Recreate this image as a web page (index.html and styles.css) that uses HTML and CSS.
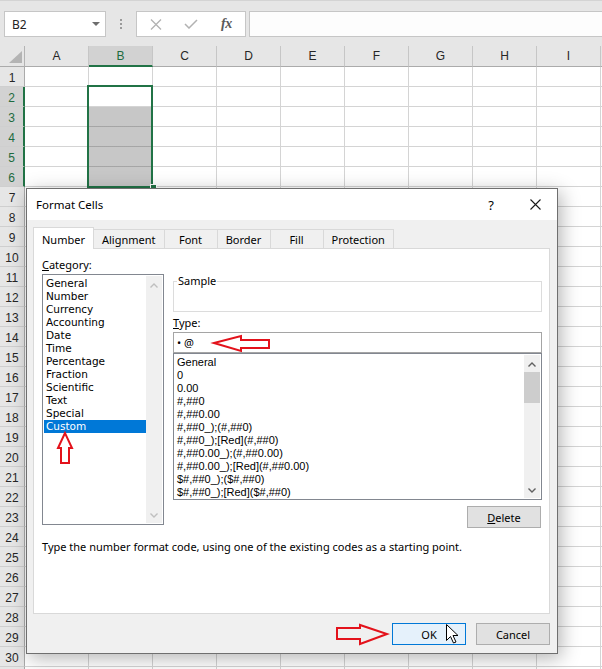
FILE: index.html
```html
<!DOCTYPE html>
<html>
<head>
<meta charset="utf-8">
<title>Format Cells</title>
<link rel="stylesheet" href="styles.css">
</head>
<body>
<div class="screen">
  <div class="formula-bar">
    <div class="namebox">
      <span class="namebox-text">B2</span>
      <svg class="namebox-caret" width="8" height="4" viewBox="0 0 8 4"><path d="M0 0H8L4 4Z" fill="#6d6d6d"/></svg>
    </div>
    <div class="grip"><i></i><i></i><i></i></div>
    <div class="fx-tools">
      <svg class="fx-cancel" width="12" height="11" viewBox="0 0 12 11"><path d="M1 0.5L11 10.5M11 0.5L1 10.5" stroke="#b2b2b2" stroke-width="1.3" fill="none"/></svg>
      <svg class="fx-enter" width="14" height="10" viewBox="0 0 14 10"><path d="M1 5L5 9L13 1" stroke="#b2b2b2" stroke-width="1.5" fill="none"/></svg>
      <span class="fx-label">fx</span>
    </div>
    <div class="formula-input"></div>
  </div>

  <div class="sheet">
    <div class="col-headers">
      <div class="corner"><svg width="24" height="20" viewBox="0 0 24 20"><path d="M9 17L22 5V17Z" fill="#b4b4b4"/></svg></div>
      <div class="col-head">A</div>
      <div class="col-head is-active">B</div>
      <div class="col-head">C</div>
      <div class="col-head">D</div>
      <div class="col-head">E</div>
      <div class="col-head">F</div>
      <div class="col-head">G</div>
      <div class="col-head">H</div>
      <div class="col-head">I</div>
      <div class="col-head col-rest"></div>
    </div>
    <div class="sheet-body">
      <div class="row-heads">
        <div class="row-head">1</div>
        <div class="row-head is-active">2</div>
        <div class="row-head is-active">3</div>
        <div class="row-head is-active">4</div>
        <div class="row-head is-active">5</div>
        <div class="row-head is-active">6</div>
        <div class="row-head">7</div>
        <div class="row-head">8</div>
        <div class="row-head">9</div>
        <div class="row-head">10</div>
        <div class="row-head">11</div>
        <div class="row-head">12</div>
        <div class="row-head">13</div>
        <div class="row-head">14</div>
        <div class="row-head">15</div>
        <div class="row-head">16</div>
        <div class="row-head">17</div>
        <div class="row-head">18</div>
        <div class="row-head">19</div>
        <div class="row-head">20</div>
        <div class="row-head">21</div>
        <div class="row-head">22</div>
        <div class="row-head">23</div>
        <div class="row-head">24</div>
        <div class="row-head">25</div>
        <div class="row-head">26</div>
        <div class="row-head">27</div>
        <div class="row-head">28</div>
        <div class="row-head">29</div>
        <div class="row-head">30</div>
        <div class="row-head"></div>
      </div>
      <div class="cells"></div>
    </div>
  </div>

  <div class="selection"><span class="fill-handle"></span></div>

  <div class="dialog">
    <div class="dlg-title">
      <span class="dlg-title-text">Format Cells</span>
      <span class="dlg-help">?</span>
      <svg class="dlg-close" width="11" height="11" viewBox="0 0 11 11"><path d="M0.5 0.5L10.5 10.5M10.5 0.5L0.5 10.5" stroke="#1a1a1a" stroke-width="1.1" fill="none"/></svg>
    </div>
    <div class="dlg-body">
      <div class="tabs">
        <div class="tab is-selected">Number</div>
        <div class="tab">Alignment</div>
        <div class="tab">Font</div>
        <div class="tab">Border</div>
        <div class="tab">Fill</div>
        <div class="tab">Protection</div>
      </div>
      <div class="panel">
        <div class="panel-cols">
          <div class="cat-col">
            <div class="field-label"><u>C</u>ategory:</div>
            <div class="listbox cat-list">
              <ul class="list-items cat-items">
                <li>General</li>
                <li>Number</li>
                <li>Currency</li>
                <li>Accounting</li>
                <li>Date</li>
                <li>Time</li>
                <li>Percentage</li>
                <li>Fraction</li>
                <li>Scientific</li>
                <li>Text</li>
                <li>Special</li>
                <li class="is-selected">Custom</li>
              </ul>
              <div class="vscroll is-disabled">
                <span class="sb-btn"><svg width="8" height="5" viewBox="0 0 8 5"><path d="M0.5 4.5L4 1L7.5 4.5" stroke="currentColor" stroke-width="1.4" fill="none"/></svg></span>
                <span class="sb-track"></span>
                <span class="sb-btn"><svg width="8" height="5" viewBox="0 0 8 5"><path d="M0.5 0.5L4 4L7.5 0.5" stroke="currentColor" stroke-width="1.4" fill="none"/></svg></span>
              </div>
            </div>
          </div>
          <div class="type-col">
            <fieldset class="sample"><legend>Sample</legend></fieldset>
            <div class="field-label type-label"><u>T</u>ype:</div>
            <div class="type-input">• @</div>
            <div class="listbox type-list">
              <ul class="list-items code-items">
                <li>General</li>
                <li>0</li>
                <li>0.00</li>
                <li>#,##0</li>
                <li>#,##0.00</li>
                <li>#,##0_);(#,##0)</li>
                <li>#,##0_);[Red](#,##0)</li>
                <li>#,##0.00_);(#,##0.00)</li>
                <li>#,##0.00_);[Red](#,##0.00)</li>
                <li>$#,##0_);($#,##0)</li>
                <li>$#,##0_);[Red]($#,##0)</li>
              </ul>
              <div class="vscroll">
                <span class="sb-btn"><svg width="8" height="5" viewBox="0 0 8 5"><path d="M0.5 4.5L4 1L7.5 4.5" stroke="currentColor" stroke-width="1.4" fill="none"/></svg></span>
                <span class="sb-thumb"></span>
                <span class="sb-track"></span>
                <span class="sb-btn"><svg width="8" height="5" viewBox="0 0 8 5"><path d="M0.5 0.5L4 4L7.5 0.5" stroke="currentColor" stroke-width="1.4" fill="none"/></svg></span>
              </div>
            </div>
            <button class="btn btn-delete"><u>D</u>elete</button>
          </div>
        </div>
        <p class="hint">Type the number format code, using one of the existing codes as a starting point.</p>
      </div>
      <div class="dlg-buttons">
        <button class="btn btn-ok">OK</button>
        <button class="btn">Cancel</button>
      </div>
    </div>
  </div>

  <svg class="annotations" width="602" height="669" viewBox="0 0 602 669">
    <g fill="none" stroke="#e3121b" stroke-width="2" stroke-linejoin="miter">
      <path d="M214 343L241 336V340H269V348H241V351Z"/>
      <path d="M65 433L58 448H61V463H69V448H72Z"/>
      <path d="M337 628H360V625L387 634L360 644V639H337Z"/>
    </g>
    <path d="M446.5 624.5V640.5L450.5 636.5L453.5 643L456 642L453 635.5H458Z" fill="#fff" stroke="#000" stroke-width="1" stroke-linejoin="round"/>
  </svg>
</div>
</body>
</html>
```

FILE: styles.css
```css
* { box-sizing: border-box; }

html, body {
  margin: 0;
  padding: 0;
}

body {
  width: 602px;
  height: 669px;
  overflow: hidden;
  background: #fff;
  font-family: "Noto Sans", sans-serif;
  color: #000;
}

.screen {
  position: relative;
  width: 602px;
  height: 669px;
  overflow: hidden;
}

/* ---------- formula bar ---------- */
.formula-bar {
  height: 46px;
  background: #e6e6e6;
  border-top: 1px solid #d4d4d4;
  display: flex;
  align-items: flex-start;
  padding: 10px 0 0 4px;
}

.namebox {
  flex: none;
  width: 102px;
  height: 26px;
  border: 1px solid #c6c6c6;
  background: #fff;
  display: flex;
  align-items: center;
  padding-left: 7px;
  font-size: 12px;
  color: #222;
}

.namebox-text { flex: 1; }

.namebox-caret { margin-right: 5px; }

.grip {
  flex: none;
  width: 2px;
  margin-left: 14px;
  padding-top: 8px;
  display: flex;
  flex-direction: column;
  gap: 2px;
}

.grip i {
  display: block;
  width: 2px;
  height: 2px;
  background: #9a9a9a;
}

.fx-tools {
  flex: none;
  width: 110px;
  height: 26px;
  margin-left: 14px;
  border: 1px solid #c6c6c6;
  background: #fff;
  display: flex;
  align-items: center;
  padding-left: 13px;
}

.fx-enter { margin-left: 22px; }

.fx-label {
  margin-left: 23px;
  font-family: "Liberation Serif", serif;
  font-style: italic;
  font-weight: bold;
  font-size: 14px;
  color: #5a5a5a;
  letter-spacing: -0.5px;
}

.formula-input {
  flex: 1;
  height: 26px;
  margin-left: 3px;
  border: 1px solid #c6c6c6;
  border-right: none;
  background: #fdfdfd;
}

/* ---------- sheet ---------- */
.col-headers {
  display: flex;
  height: 21px;
  background: #e6e6e6;
}

.corner {
  flex: none;
  width: 25px;
  border-right: 1px solid #b4b4b4;
  border-bottom: 1px solid #ababab;
}

.corner svg { display: block; }

.col-head {
  flex: none;
  width: 64px;
  border-right: 1px solid #c6c6c6;
  border-bottom: 1px solid #ababab;
  display: flex;
  align-items: center;
  justify-content: center;
  font-family: "Liberation Sans", sans-serif;
  font-size: 12px;
  color: #262626;
}

.col-head.is-active {
  background: #d2d2d2;
  color: #1e6b40;
  border-bottom: 2px solid #217346;
}

.col-rest {
  flex: 1;
  border-right: none;
}

.sheet-body {
  display: flex;
  height: 602px;
}

.row-heads {
  flex: none;
  width: 25px;
  background: #e6e6e6;
}

.row-head {
  height: 20px;
  border-right: 1px solid #ababab;
  border-bottom: 1px solid #cfcfcf;
  display: flex;
  align-items: center;
  justify-content: center;
  padding-top: 2px;
  font-family: "Liberation Sans", sans-serif;
  font-size: 12px;
  color: #262626;
}

.row-head.is-active {
  background: #d2d2d2;
  color: #1e6b40;
  border-right: 2px solid #217346;
}

.cells {
  flex: 1;
  background-color: #fff;
  background-image:
    repeating-linear-gradient(to right, transparent 0 63px, #d4d4d4 63px 64px),
    repeating-linear-gradient(to bottom, transparent 0 19px, #d4d4d4 19px 20px);
}

.selection {
  position: absolute;
  left: 87px;
  top: 85px;
  width: 66px;
  height: 103px;
  border: 2px solid #217346;
  background: linear-gradient(to bottom, transparent 20px, rgba(0, 0, 0, 0.22) 20px);
}

.fill-handle {
  position: absolute;
  left: 61px;
  top: 97px;
  width: 7px;
  height: 7px;
  background: #217346;
  border: 1px solid #fff;
}

/* ---------- dialog ---------- */
.dialog {
  position: absolute;
  left: 26px;
  top: 188px;
  width: 532px;
  height: 466px;
  border: 1px solid #6f6f6f;
  background: #f0f0f0;
  box-shadow: 3px 4px 18px rgba(0, 0, 0, 0.3);
  display: flex;
  flex-direction: column;
  font-size: 11px;
}

.dlg-title {
  height: 31px;
  flex: none;
  background: #fff;
  display: flex;
  align-items: center;
  padding: 0 16px 0 9px;
  font-size: 11.5px;
}

.dlg-title-text { flex: 1; }

.dlg-help {
  margin-right: 36px;
  font-size: 13px;
}

.dlg-body {
  flex: 1;
  padding: 7px 7px 8px 6px;
  display: flex;
  flex-direction: column;
}

.tabs {
  display: flex;
  align-items: flex-end;
  height: 21px;
  flex: none;
}

.tab {
  height: 19px;
  min-width: 54px;
  padding: 1px 8px 0;
  margin-left: -1px;
  border: 1px solid #d9d9d9;
  border-bottom: none;
  background: #f0f0f0;
  display: flex;
  align-items: center;
  justify-content: center;
}

.tab.is-selected {
  height: 22px;
  min-width: 60px;
  margin-left: 0;
  margin-bottom: -1px;
  padding-top: 2px;
  background: #fff;
  position: relative;
  z-index: 1;
}

.panel {
  flex: none;
  height: 366px;
  background: #fff;
  border: 1px solid #d9d9d9;
  padding: 8px 0 0 8px;
}

.panel-cols {
  display: flex;
  gap: 9px;
}

.cat-col {
  flex: none;
  width: 122px;
}

.type-col {
  flex: none;
  width: 369px;
  padding-top: 17px;
  display: flex;
  flex-direction: column;
}

.field-label {
  height: 17px;
  line-height: 16px;
}

.type-label { margin-top: 3px; }

.listbox {
  border: 1px solid #828790;
  background: #fff;
  display: flex;
  padding: 1px;
}

.cat-list { height: 251px; }

.type-list { height: 147px; }

.list-items {
  list-style: none;
  margin: 0;
  padding: 1px 0 0;
  flex: 1;
  min-width: 0;
}

.list-items li {
  height: 13px;
  line-height: 13px;
  padding-left: 2px;
  white-space: nowrap;
}

.cat-items li {
  font-family: "DejaVu Sans", sans-serif;
  font-size: 10.5px;
}

.list-items li.is-selected {
  background: #0078d7;
  color: #fff;
}

.code-items li {
  font-family: "Liberation Sans", sans-serif;
  font-size: 11px;
}

.vscroll {
  flex: none;
  width: 16px;
  background: #f0f0f0;
  display: flex;
  flex-direction: column;
  color: #606060;
}

.vscroll.is-disabled { color: #bfbfbf; }

.sb-btn {
  height: 17px;
  display: flex;
  align-items: center;
  justify-content: center;
  padding-top: 1px;
}

.sb-btn svg { display: block; }

.sb-thumb {
  height: 31px;
  background: #cdcdcd;
}

.sb-track { flex: 1; }

.sample {
  margin: 0;
  padding: 0;
  height: 38px;
  border: 1px solid #dcdcdc;
}

.sample legend {
  margin-left: 3px;
  padding: 0 1px;
  line-height: 14px;
}

.type-input {
  height: 21px;
  border: 1px solid #a5a5a5;
  background: #fff;
  padding-left: 3px;
  line-height: 19px;
}

.btn {
  width: 74px;
  height: 22px;
  padding: 0;
  border: 1px solid #adadad;
  background: #e1e1e1;
  font-family: "Noto Sans", sans-serif;
  font-size: 11px;
  color: #000;
}

.btn-delete {
  align-self: flex-end;
  margin-top: 6px;
  margin-right: 1px;
}

.btn-ok {
  background: #e5f1fb;
  border-color: #0078d7;
}

.hint {
  margin: 11px 0 0;
  line-height: 16px;
}

.dlg-buttons {
  flex: none;
  margin-top: 9px;
  display: flex;
  justify-content: flex-end;
  gap: 10px;
}

/* ---------- annotations ---------- */
.annotations {
  position: absolute;
  left: 0;
  top: 0;
  pointer-events: none;
}
```
